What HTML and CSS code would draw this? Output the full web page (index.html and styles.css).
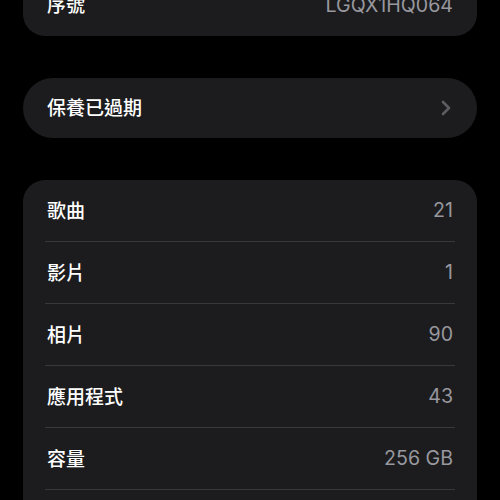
FILE: index.html
```html
<!doctype html>
<html>
<head>
    <meta charset="UTF-8">
    <title>關於本機</title>
    <link rel="stylesheet" href="styles.css">
</head>
<body>
<div class="m-page">
    <ul class="m-group m-group-top">
        <li><span class="name">序號</span><span class="val">LGQX1HQ064</span></li>
    </ul>
    <a class="m-link" href="javascript:void(0);">
        <span class="name">保養已過期</span>
        <svg class="chev" width="10" height="16" viewBox="0 0 10 16"><path d="M2 2l6 6-6 6" fill="none" stroke="#5c5c61" stroke-width="2.6" stroke-linecap="round" stroke-linejoin="round"/></svg>
    </a>
    <ul class="m-group m-group-list">
        <li><span class="name">歌曲</span><span class="val">21</span></li>
        <li><span class="name">影片</span><span class="val">1</span></li>
        <li><span class="name">相片</span><span class="val">90</span></li>
        <li><span class="name">應用程式</span><span class="val">43</span></li>
        <li><span class="name">容量</span><span class="val">256 GB</span></li>
    </ul>
</div>
</body>
</html>
```
FILE: styles.css
```css
html, body, ul { margin: 0; padding: 0; }
ul { list-style: none; }
body { background: #000; color: #fff; font: 19px/1 Inter, "Noto Sans CJK TC", sans-serif; overflow: hidden; height: 500px; }
.m-page { display: flex; flex-direction: column; gap: 42px; padding: 0 23px; }
.m-group { background: #1c1c1e; border-radius: 22px; }
.m-group-top { margin-top: -26px; }
.m-group-list { padding-bottom: 40px; }
.m-group li { display: flex; align-items: center; justify-content: space-between; height: 61px; margin: 0 22px; padding: 1px 2px 0; box-sizing: border-box; border-bottom: 1px solid #38383b; }
.m-group li { height: 62px; }
.m-group-top li { border-bottom: 0; }
.m-link { display: flex; align-items: center; justify-content: space-between; height: 60px; padding: 0 26px 0 24px; background: #1c1c1e; border-radius: 30px; color: #fff; text-decoration: none; }
.name { font-weight: 500; }
.val { color: #98989e; font-size: 19.6px; }
.chev { display: block; }
```
